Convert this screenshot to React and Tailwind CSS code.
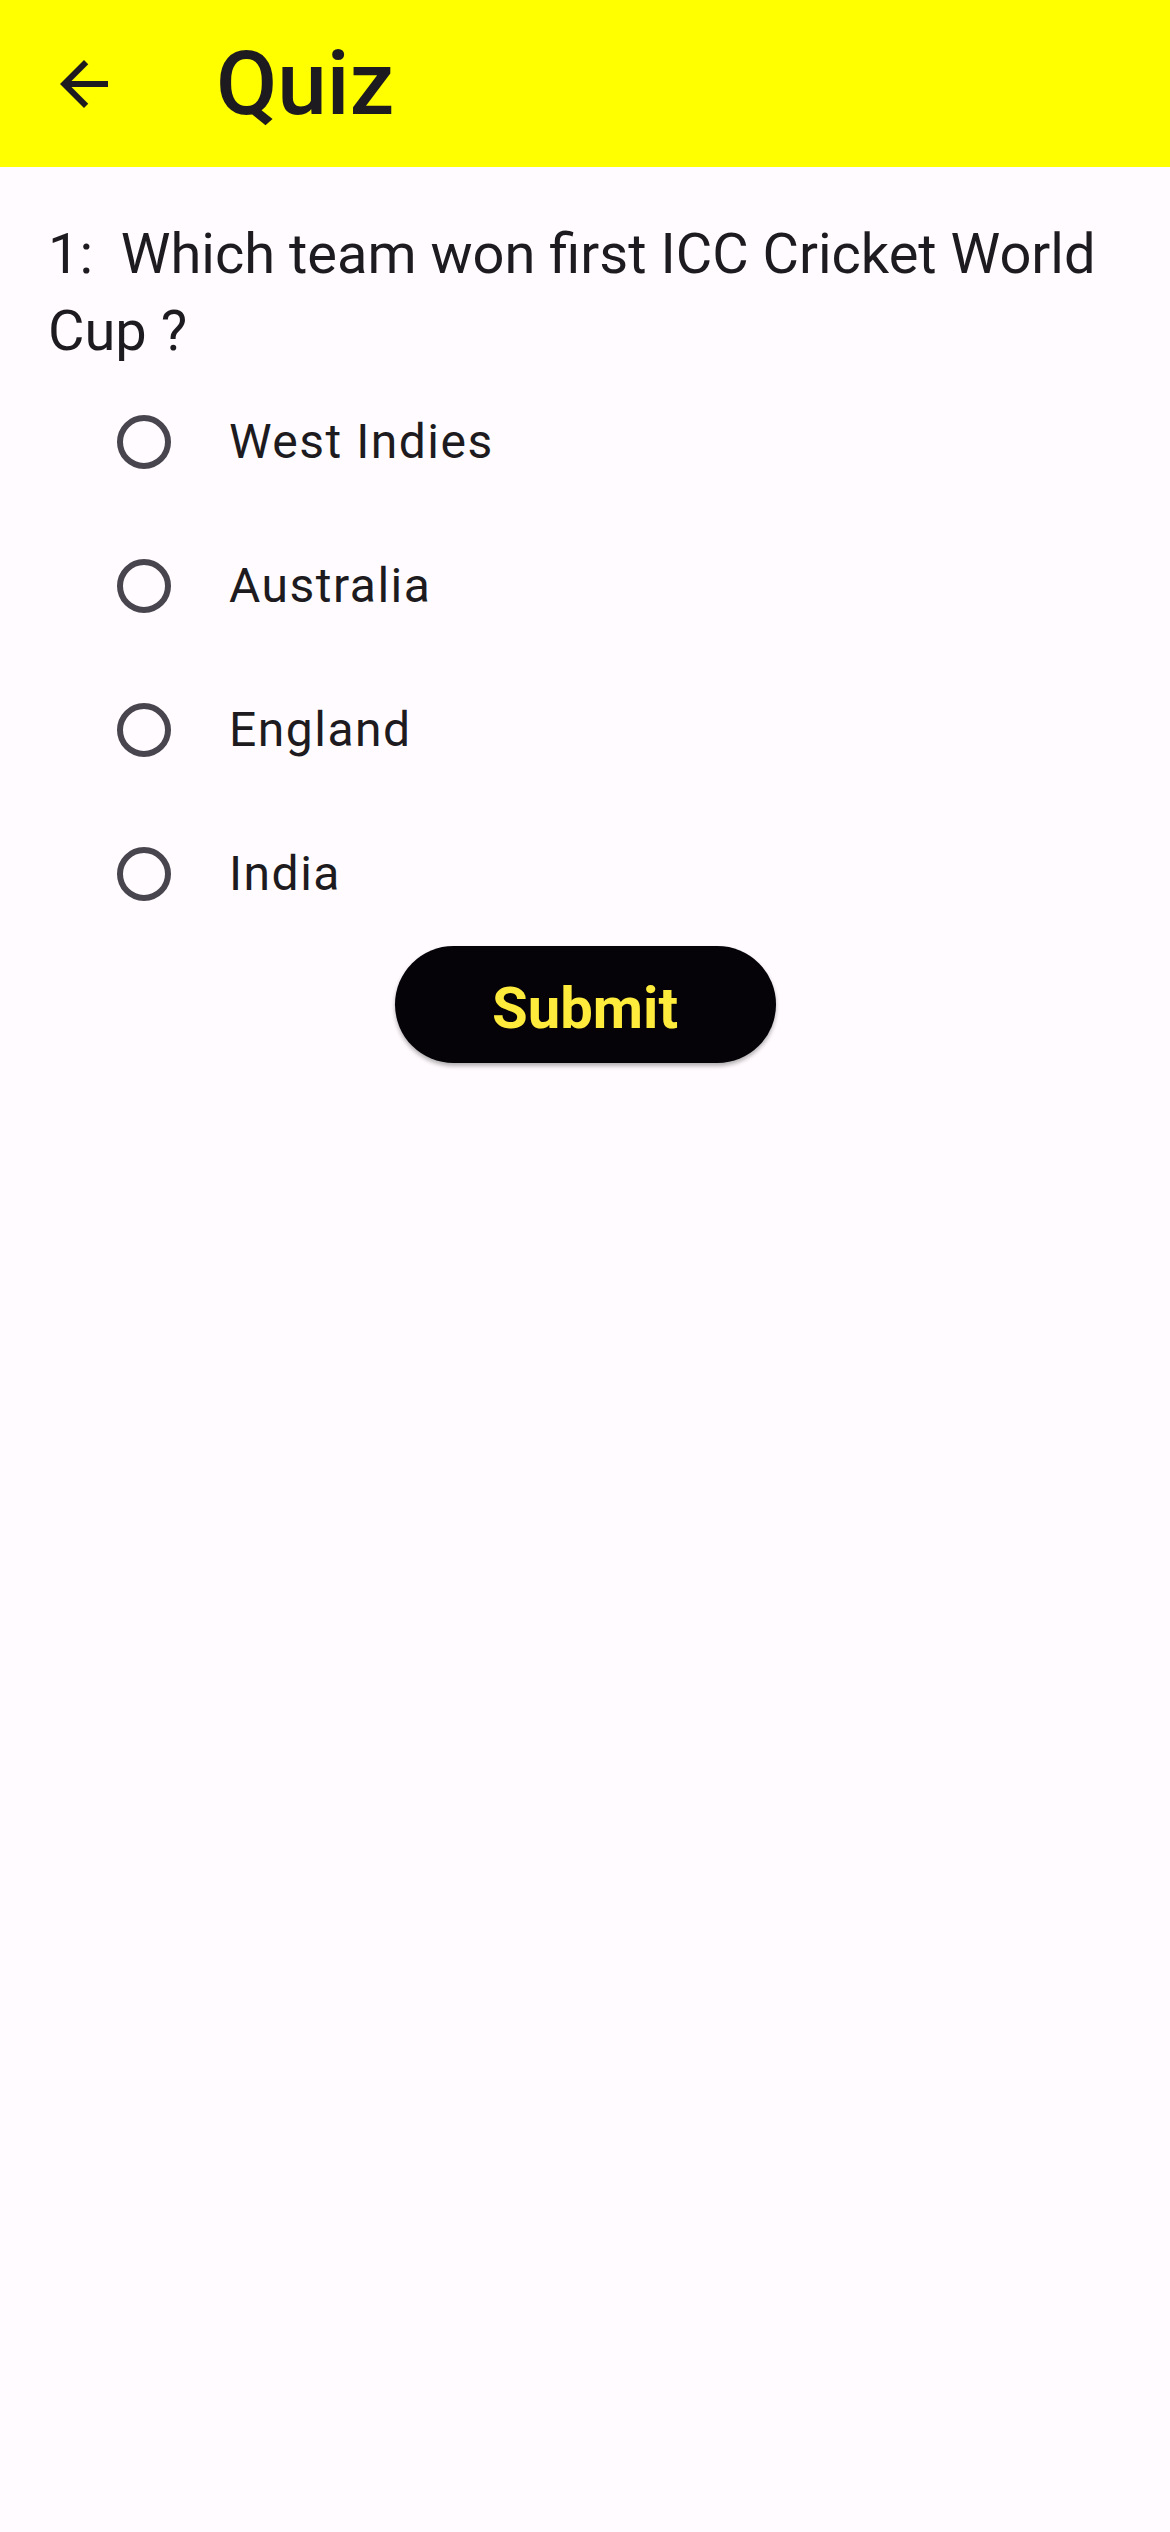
import React, { useState } from 'react';

const options = ['West Indies', 'Australia', 'England', 'India'];

export default function App() {
  const [selected, setSelected] = useState(null);

  return (
    <div className="min-h-[2532px] bg-[#fffbfe] font-['Roboto',sans-serif] text-[#1d1b20]">
      {/* App bar */}
      <header className="flex h-[167px] items-center bg-[#ffff00]">
        <button className="flex h-[168px] w-[168px] items-center justify-center">
          <svg viewBox="0 0 24 24" className="h-[72px] w-[72px]" fill="#1d1b20">
            <path d="M20 11H7.83l5.59-5.59L12 4l-8 8 8 8 1.41-1.41L7.83 13H20v-2z" />
          </svg>
        </button>
        <h1 className="ml-[48px] text-[89px] font-medium leading-none">Quiz</h1>
      </header>

      <main className="pt-[49px]">
        <p className="whitespace-pre-wrap px-[48px] text-[56px] leading-[77px]">
          {'1:  Which team won first ICC Cricket World Cup ?'}
        </p>

        <div className="flex flex-col">
          {options.map((o, i) => (
            <label
              key={o}
              onClick={() => setSelected(i)}
              className="flex h-[144px] cursor-pointer items-center"
            >
              <span className="ml-[117px] flex h-[54px] w-[54px] items-center justify-center rounded-full border-[6px] border-[#49454f]">
                {selected === i && <span className="h-[30px] w-[30px] rounded-full bg-[#49454f]" />}
              </span>
              <span className="ml-[58px] text-[48px] tracking-[1.5px]">{o}</span>
            </label>
          ))}
        </div>

        <div className="flex justify-center">
          <button className="h-[117px] w-[381px] rounded-full bg-[#050308] pt-[8px] text-[58px] font-bold text-[#ffeb3b] shadow-[0_3px_4px_rgba(0,0,0,0.3)]">
            Submit
          </button>
        </div>
      </main>
    </div>
  );
}
